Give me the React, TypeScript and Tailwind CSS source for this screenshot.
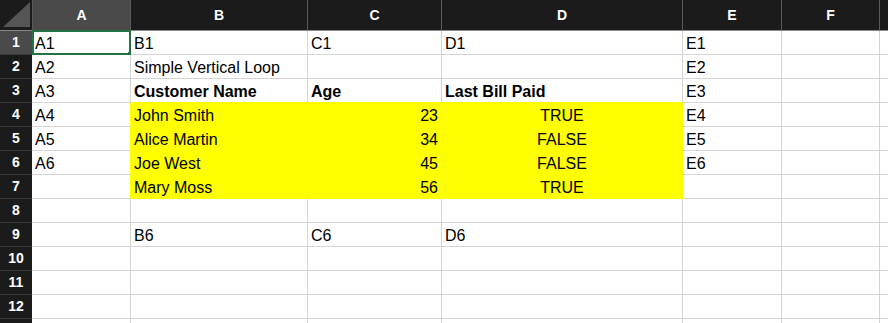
import React from "react";

type Cell = { t: string; bold?: boolean; align?: "left" | "right" | "center" };

const L = (t: string, bold = false): Cell => ({ t, bold, align: "left" });
const R = (t: string): Cell => ({ t, align: "right" });
const C = (t: string): Cell => ({ t, align: "center" });
const E: Cell = { t: "" };

const rows: Cell[][] = [
  [L("A1"), L("B1"), L("C1"), L("D1"), L("E1"), E, E],
  [L("A2"), L("Simple Vertical Loop"), E, E, L("E2"), E, E],
  [L("A3"), L("Customer Name", true), L("Age", true), L("Last Bill Paid", true), L("E3"), E, E],
  [L("A4"), L("John Smith"), R("23"), C("TRUE"), L("E4"), E, E],
  [L("A5"), L("Alice Martin"), R("34"), C("FALSE"), L("E5"), E, E],
  [L("A6"), L("Joe West"), R("45"), C("FALSE"), L("E6"), E, E],
  [E, L("Mary Moss"), R("56"), C("TRUE"), E, E, E],
  [E, E, E, E, E, E, E],
  [E, L("B6"), L("C6"), L("D6"), E, E, E],
  [E, E, E, E, E, E, E],
  [E, E, E, E, E, E, E],
  [E, E, E, E, E, E, E],
  [E, E, E, E, E, E, E],
];

const cols = ["A", "B", "C", "D", "E", "F", ""];

function isYellow(r: number, c: number) {
  return r >= 3 && r <= 6 && c >= 1 && c <= 3;
}

export default function App() {
  return (
    <div className="w-[888px] h-[323px] overflow-hidden bg-white" style={{ fontFamily: '"Liberation Sans", Arial, sans-serif' }}>
      <div className="grid grid-cols-[32px_99px_177px_134px_241px_99px_98px_1fr] grid-rows-[31px_repeat(13,24px)]">
        {/* corner */}
        <div className="relative bg-[#1b1b1b] border-b border-[#8a8a8a]">
          <div className="absolute right-[2px] bottom-[3px] w-0 h-0 border-l-[27px] border-l-transparent border-b-[25px] border-b-[#555555]" />
        </div>
        {cols.map((c, i) => (
          <div
            key={"h" + i}
            className={
              "flex items-center justify-center text-[14px] font-bold text-white border-b border-[#8a8a8a] " +
              (i < 6 ? "border-r border-r-[#5a5a5a] " : "") +
              (i === 0 ? "bg-[#4a4a4a] border-l border-l-[#5a5a5a]" : "bg-[#1b1b1b]")
            }
          >
            {c}
          </div>
        ))}
        {rows.map((row, r) => (
          <React.Fragment key={"r" + r}>
            <div
              className={
                "flex items-center justify-center text-[14px] font-bold text-white border-b border-[#3a3a3a] " +
                (r === 0 ? "bg-[#4a4a4a]" : "bg-[#1b1b1b]")
              }
            >
              {r < 12 ? r + 1 : ""}
            </div>
            {row.map((cell, c) => {
              const y = isYellow(r, c);
              const rightYellow = y || (c === 0 && r >= 3 && r <= 6);
              const bottomYellow = y || (r === 2 && c >= 1 && c <= 3);
              const borderR = c === 6 ? "" : rightYellow ? "border-r border-r-[#ffff00] " : "border-r border-r-[#d4d4d4] ";
              const borderB = bottomYellow ? "border-b border-b-[#ffff00] " : "border-b border-b-[#d4d4d4] ";
              const align =
                cell.align === "right" ? "text-right pr-[3px]" : cell.align === "center" ? "text-center" : "text-left pl-[3px]";
              return (
                <div
                  key={"c" + r + "-" + c}
                  className={
                    "relative whitespace-nowrap text-[16px] leading-[20px] pt-[3px] text-black " +
                    borderR +
                    borderB +
                    (y ? "bg-[#ffff00] " : "bg-white ") +
                    (cell.bold ? "font-bold " : "") +
                    align
                  }
                >
                  {cell.t}
                  {r === 0 && c === 0 && (
                    <>
                      <div className="absolute left-0 top-[-1px] right-[-1px] bottom-[-1px] border-2 border-[#217346] pointer-events-none" />
                      <div className="absolute right-[-3px] bottom-[-3px] w-[5px] h-[5px] bg-[#217346]" />
                    </>
                  )}
                </div>
              );
            })}
          </React.Fragment>
        ))}
      </div>
    </div>
  );
}
